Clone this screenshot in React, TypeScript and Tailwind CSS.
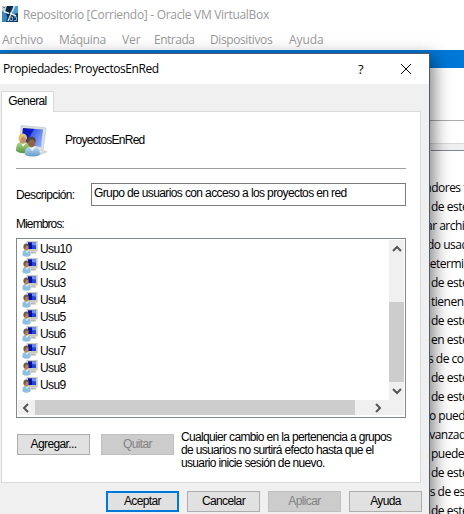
import React from "react";

const rows = [
  { text: "adores t", x: "-ml-[6px]" },
  { text: "de este", x: "" },
  { text: "ar archi", x: "-ml-[5px]" },
  { text: "do usad", x: "-ml-[4px]" },
  { text: "determi", x: "-ml-[8px]" },
  { text: "de este", x: "" },
  { text: "tienen", x: "" },
  { text: "de este", x: "" },
  { text: "en este", x: "" },
  { text: "s de co", x: "-ml-[3px]" },
  { text: "de este", x: "" },
  { text: "de este", x: "" },
  { text: "o pued", x: "-ml-[2px]" },
  { text: "avanzad", x: "-ml-[8px]" },
  { text: "puede", x: "" },
  { text: "de este", x: "" },
  { text: "os de es", x: "-ml-[8px]" },
  { text: "de este", x: "" },
];

const users = ["Usu10", "Usu2", "Usu3", "Usu4", "Usu5", "Usu6", "Usu7", "Usu8", "Usu9"];

function VBoxIcon() {
  return (
    <svg className="h-4 w-4 shrink-0" viewBox="0 0 16 16">
      <rect width="16" height="16" fill="#143c60" />
      <path d="M0 0h7l1 5-3 3H0z" fill="#c3d0d6" />
      <path d="M1 1.500h5" stroke="#71838d" strokeDasharray="2 1" />
      <path d="M0 5l6 3-2 8H0z" fill="#3388bd" />
      <path d="M11 0h5v7l-5 1z" fill="#4aa0d2" />
      <path d="M5 0h5l-2 6 3 5-4 3-4-8z" fill="#0c2440" />
      <path d="M12.500 0L6 15M2 5.500l5 2M8 7l6 3" stroke="#dff2fa" strokeWidth="1.4" />
      <path d="M8 11h2.500v3.500H8zM12 11h2.500v3.500H12" stroke="#7fb0cf" fill="none" />
    </svg>
  );
}

function GroupIcon() {
  return (
    <svg className="h-8 w-8 shrink-0" viewBox="0 0 32 32">
      <defs>
        <linearGradient id="screen" x1="0" y1="0" x2="1" y2=".5">
          <stop stopColor="#0812a8" />
          <stop offset=".48" stopColor="#0f1fc8" />
          <stop offset=".52" stopColor="#3f62ea" />
          <stop offset="1" stopColor="#7fa2f6" />
        </linearGradient>
        <linearGradient id="green" x2="0" y2="1">
          <stop stopColor="#b2d98b" />
          <stop offset="1" stopColor="#569444" />
        </linearGradient>
        <linearGradient id="blue" x2="0" y2="1">
          <stop stopColor="#b9dcf3" />
          <stop offset="1" stopColor="#6599c9" />
        </linearGradient>
      </defs>
      <path d="M20 29l9-4 3 2-7 3z" fill="#d7d7d7" />
      <path d="M5 .5l23 2q2 0 2 2l-3 21-7 1L4 20z" fill="#dcdfe2" stroke="#bcc1c6" strokeWidth=".6" />
      <path d="M7 3l20 1.500-2 17.500-20-3z" fill="url(#screen)" />
      <path d="M0 26q0-8 4-9h6q4 2 3 10-7 3-13-1z" fill="url(#green)" />
      <path d="M5 18l2 4 3-4" fill="#f4f6e8" />
      <ellipse cx="7" cy="14" rx="3.500" ry="4.800" fill="#c7935d" />
      <path d="M2.500 15q-1-6.500 5-6.500 4 1 3.500 6l-3-3q-3 0-4 5z" fill="#dfc278" />
      <path d="M9 30q-1-7 4-8h6q5 1 5 8-7 3-15 0z" fill="url(#blue)" />
      <path d="M13 21l3 5 4-4" fill="#eef7fc" />
      <ellipse cx="15.500" cy="17.500" rx="3.800" ry="5" fill="#93633d" />
      <path d="M11 17.500q-1-6 5-6 4.500 1 3.500 6l-2.500-3q-3-1-5 3z" fill="#4a4644" />
    </svg>
  );
}

function UserIcon() {
  return (
    <svg className="h-4 w-4 shrink-0" viewBox="0 0 16 16">
      <path d="M4.500 0H15.700V10.500H4.500z" fill="#c9c9bd" />
      <path d="M9 10.500h4l1.500 2H8z" fill="#b8b8b0" />
      <path d="M6 1.500h8v6.500H6z" fill="#2443da" />
      <path d="M6 1.500h4v6.500H6z" fill="#0710a0" />
      <path d="M10 1.500h4v3L10 4z" fill="#6b90f0" />
      <path d="M.5 14.500Q0 9.500 3 9h3q3 1 2.500 5.500-4 2.500-8 0z" fill="#8ebfe0" />
      <path d="M3 9l2 3 2-3" fill="#e5f3fb" />
      <ellipse cx="4.300" cy="6.500" rx="2.300" ry="3.300" fill="#b78359" />
      <path d="M1.500 7.500Q.7 2.500 4.500 2.500q2.500 .7 2 2.500L4 4.800 3 8z" fill="#6a5c50" />
    </svg>
  );
}

function Chevron({ d }: { d: string }) {
  return (
    <svg className="h-[10px] w-[10px]" viewBox="0 0 10 10" fill="none" stroke="#555" strokeWidth="2">
      <path d={d} />
    </svg>
  );
}

function Button({ label, kind = "normal" }: { label: string; kind?: "normal" | "default" | "off" }) {
  const look =
    kind === "default"
      ? "border-2 border-[#0078d7] bg-[#e1e1e1]"
      : kind === "off"
        ? "border border-[#bfbfbf] bg-[#cccccc] text-[#838383]"
        : "border border-[#adadad] bg-[#e1e1e1]";
  return <button className={`flex h-[21px] w-[73px] shrink-0 items-center justify-center ${look}`}>{label}</button>;
}

export default function App() {
  return (
    <div className="relative h-[514px] w-[464px] overflow-hidden bg-white font-['Open_Sans',sans-serif] text-[12px] leading-[16px] whitespace-nowrap text-black">
      <header className="h-[50px] text-[#999]">
        <div className="flex h-7 items-center pl-[2px]">
          <VBoxIcon />
          <span className="ml-[5px] pt-px tracking-[-0.3px]">Repositorio [Corriendo] - Oracle VM VirtualBox</span>
        </div>
        <nav className="flex h-[22px] items-center pt-px pl-[2px] tracking-[-0.1px]">
          <span className="w-[57px]">Archivo</span>
          <span className="w-[63px] tracking-[-0.35px]">Máquina</span>
          <span className="w-[32px]">Ver</span>
          <span className="w-[56px] tracking-[-0.5px]">Entrada</span>
          <span className="w-[79px] tracking-[-0.4px]">Dispositivos</span>
          <span>Ayuda</span>
        </nav>
      </header>
      <div className="h-[18px] bg-[#0078d7]" />
      <div className="h-[52px] bg-white" />
      <div className="h-[24px] border-t border-b border-t-[#aaa] border-b-[#d9d9d9]" />
      <div className="h-[6px] bg-[#f0f0f0]" />
      <main className="ml-[431px] h-[364px] border-t border-[#828790] pt-[27px]">
        {rows.map((r, i) => (
          <div key={i} className={`h-[19px] leading-[19px] tracking-[-0.5px] ${r.x}`}>{r.text}</div>
        ))}
      </main>

      <section className="absolute top-[53px] left-0 h-[480px] w-[430px] border-t border-r border-[#4d5964] bg-[#f0f0f0] shadow-[3px_5px_16px_1px_rgba(0,0,0,0.5)]">
        <div className="flex h-[30px] items-center bg-white pl-[3px]">
          <span className="w-[355px] tracking-[-0.42px]">Propiedades: ProyectosEnRed</span>
          <span className="w-[43px] text-[13px]">?</span>
          <svg className="h-[10px] w-[10px]" viewBox="0 0 10 10" stroke="#000" strokeWidth="1">
            <path d="M0 0l10 10M10 0L0 10" />
          </svg>
        </div>
        <div className="pt-[7px] pl-[1px] font-['Liberation_Sans',Arial,sans-serif] text-[12px] leading-[13px] tracking-[-0.62px]">
          <div className="relative z-10 -mb-px flex h-[21px] w-[53px] items-center justify-center border border-b-0 border-[#d9d9d9] bg-white pb-px">General</div>
          <div className="h-[372px] w-[420px] border border-[#d9d9d9] bg-white px-[14px] pt-[13px]">
            <div className="flex h-[44px] w-[390px] border-b border-[#a0a0a0]">
              <GroupIcon />
              <span className="mt-[9px] ml-[17px] tracking-[-0.75px]">ProyectosEnRed</span>
            </div>
            <div className="mt-[14px] flex h-[23px]">
              <span className="w-[75px] pt-[6px]">Descripción:</span>
              <div className="h-[23px] w-[315px] border border-[#7a7a7a] pt-[3px] pl-[2px]">Grupo de usuarios con acceso a los proyectos en red</div>
            </div>
            <div className="mt-[12px] h-[20px] tracking-[-0.9px]">Miembros:</div>
            <div className="h-[180px] w-[390px] border border-[#828790] p-px">
              <div className="flex h-[160px]">
                <div className="w-[371px] pl-[4px]">
                  {users.map((u) => (
                    <div key={u} className="flex h-[17px] items-center gap-[2px]">
                      <UserIcon />
                      <span className="pt-px">{u}</span>
                    </div>
                  ))}
                </div>
                <div className="flex w-[15px] flex-col items-center bg-[#f0f0f0] pt-[4px]">
                  <Chevron d="M1 7l4-4 4 4" />
                  <div className="mt-[48px] h-[80px] w-[15px] shrink-0 bg-[#cdcdcd]" />
                  <div className="mt-[4px]"><Chevron d="M1 3l4 4 4-4" /></div>
                </div>
              </div>
              <div className="flex h-[15px] w-[386px] items-center bg-[#f0f0f0] pl-[3px]">
                <Chevron d="M7 1L3 5l4 4" />
                <div className="ml-[4px] h-[15px] w-[320px] bg-[#cdcdcd]" />
                <div className="ml-[18px]"><Chevron d="M3 1l4 4-4 4" /></div>
              </div>
            </div>
            <div className="mt-[13px] flex pl-px">
              <div className="flex gap-[11px] pt-[3px]">
                <Button label="Agregar..." />
                <Button label="Quitar" kind="off" />
              </div>
              <p className="ml-[7px] tracking-[-0.66px]">
                Cualquier cambio en la pertenencia a grupos<br />
                de usuarios no surtirá efecto hasta que el<br />
                usuario inicie sesión de nuevo.
              </p>
            </div>
          </div>
          <div className="mt-[8px] ml-[105px] flex gap-[8px]">
            <Button label="Aceptar" kind="default" />
            <Button label="Cancelar" />
            <Button label="Aplicar" kind="off" />
            <Button label="Ayuda" />
          </div>
        </div>
      </section>
    </div>
  );
}
